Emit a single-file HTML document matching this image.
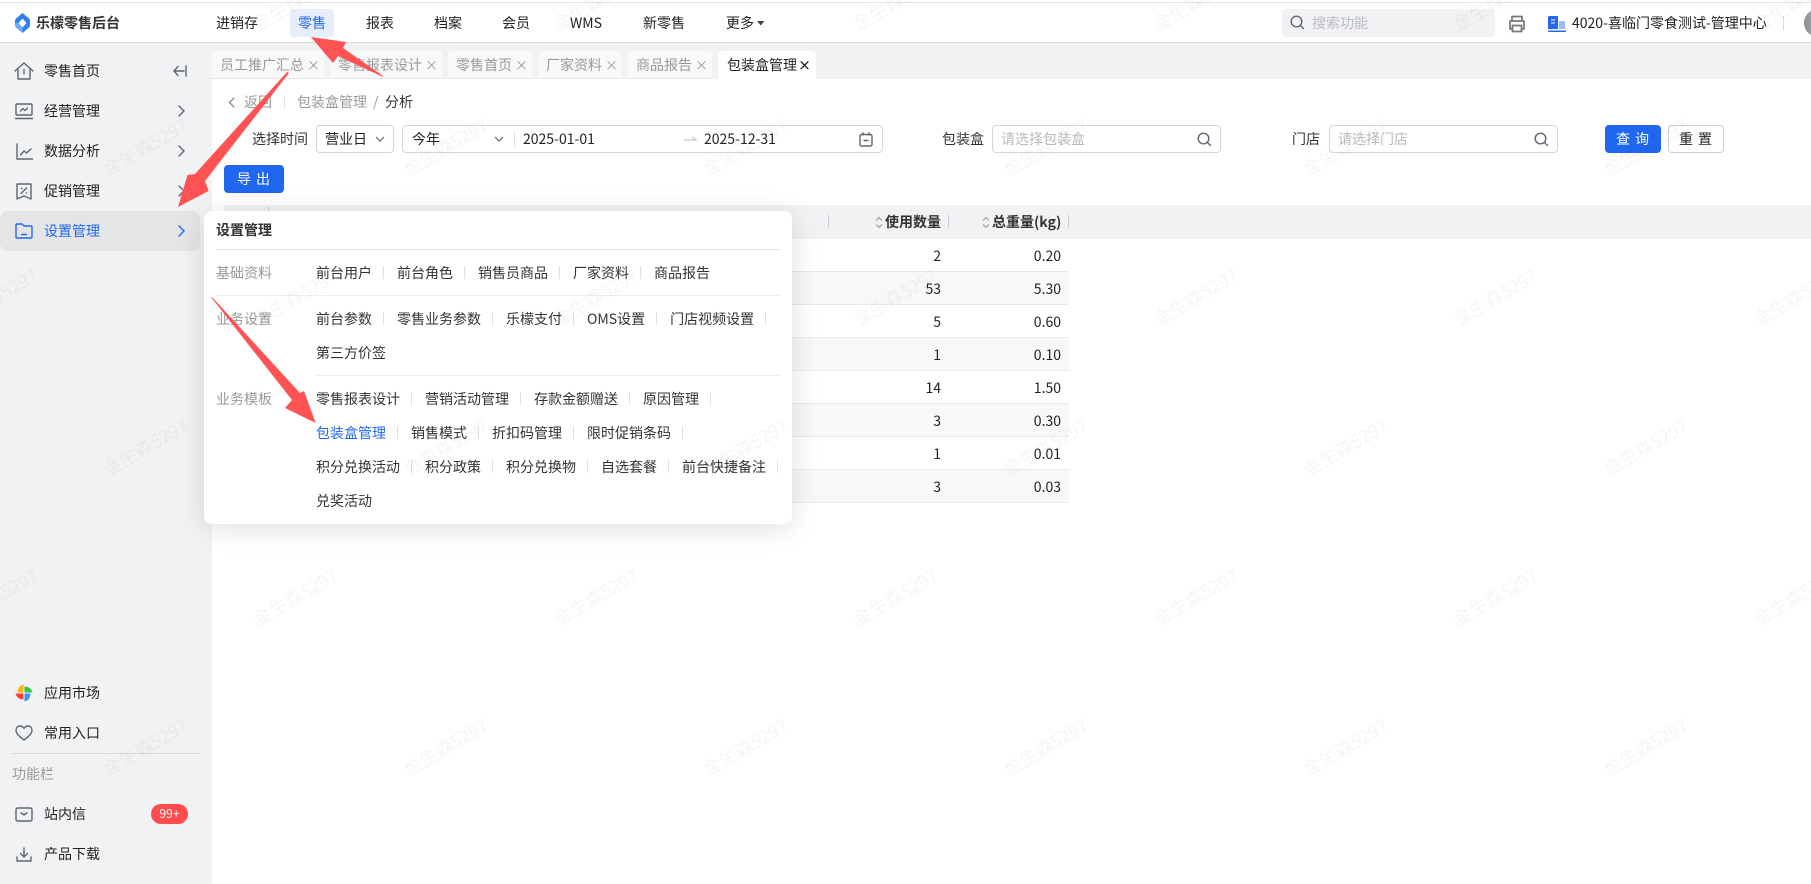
<!DOCTYPE html>
<html lang="zh">
<head>
<meta charset="utf-8">
<title>包装盒管理</title>
<style>
html,body{margin:0;padding:0;width:1811px;height:884px;overflow:hidden;background:#fff}
body{position:relative;font-family:"Noto Sans CJK SC","Liberation Sans",sans-serif;font-size:14px;color:#222}
.t{position:absolute;line-height:20px;height:20px;white-space:nowrap}
.b{position:absolute;box-sizing:border-box}
svg{position:absolute;overflow:visible}
.ic{fill:none;stroke:#5f6570;stroke-width:1.4;stroke-linecap:round;stroke-linejoin:round}
.tab{position:absolute;top:51px;height:28px;background:#f8f9fa;border-radius:4px 4px 0 0;border-bottom:1px solid #e4e6e9;box-sizing:border-box;color:#999;line-height:28px;padding-left:8px;white-space:nowrap}
.tab i{font-style:normal;position:absolute;right:4px;top:0;font-size:13px;color:#999}
.tab.on{background:#fff;color:#222;border-bottom:0;padding-left:9px}
.tab.on i{color:#222;font-weight:700;right:5px}
.sel{position:absolute;top:125px;height:28px;border:1px solid #d4d6da;border-radius:4px;box-sizing:border-box;background:#fff}
.btn{position:absolute;height:28px;top:125px;border-radius:4px;box-sizing:border-box;text-align:center;line-height:26px;letter-spacing:5px}
.row{position:absolute;left:224px;width:845px;height:33px;border-bottom:1px solid #e8eaec;box-sizing:border-box}
.row.e{background:#f7f9f9}
.v{position:absolute;line-height:20px;top:7px;text-align:right}
.m{position:absolute;left:316px;white-space:nowrap;line-height:20px;height:20px;color:#333;display:flex}
.m span{padding-right:12px;margin-right:13px;position:relative}
.m span:after{content:"";position:absolute;right:0;top:3px;height:13px;width:1px;background:#dcdfe3}
.m span.n:after{display:none}
.g{color:#999;position:absolute;left:216px;line-height:20px}
</style>
</head>
<body>

<!-- header -->
<div class="b" style="left:0;top:2px;width:1811px;height:41px;background:#fff;border-top:1px solid #e2e4e7;border-bottom:1px solid #d9dbde"></div>
<svg style="left:15px;top:13px" width="15" height="20" viewBox="0 0 15 20">
<path d="M7.5 0 L14 5.5 Q15 6.5 15 8 L15 12 Q15 13.5 14 14.5 L7.5 20 L1 14.5 Q0 13.5 0 12 L0 8 Q0 6.5 1 5.5 Z" fill="#2f80f0"/>
<path d="M7.5 5.5 L11.5 10 L7.5 14.5 L3.5 10 Z" fill="#fff"/>
<path d="M0 10 L3.5 10 L7.5 14.5 L7.5 20 L1 14.5 Q0 13.5 0 12 Z" fill="#6aaef7"/>
</svg>
<div class="t" style="left:36px;top:13px;font-weight:700;font-size:14px;color:#333">乐檬零售后台</div>
<div class="t" style="left:216px;top:13px">进销存</div>
<div class="b" style="left:290px;top:9px;width:44px;height:28px;background:#e6edfb;border-radius:4px"></div>
<div class="t" style="left:298px;top:13px;color:#2468f2">零售</div>
<div class="t" style="left:366px;top:13px">报表</div>
<div class="t" style="left:434px;top:13px">档案</div>
<div class="t" style="left:502px;top:13px">会员</div>
<div class="t" style="left:570px;top:13px">WMS</div>
<div class="t" style="left:643px;top:13px">新零售</div>
<div class="t" style="left:726px;top:13px">更多</div>
<svg style="left:757px;top:21px" width="8" height="5"><path d="M0 0H7.5L3.75 4.5Z" fill="#444"/></svg>

<div class="b" style="left:1282px;top:9px;width:213px;height:28px;background:#f1f2f4;border-radius:4px"></div>
<svg style="left:1290px;top:15px" width="15" height="15" viewBox="0 0 15 15"><circle cx="6.5" cy="6.5" r="5.3" class="ic"/><path d="M10.5 10.5L13.5 13.5" class="ic"/></svg>
<div class="t" style="left:1312px;top:13px;color:#b9bcc1">搜索功能</div>
<svg style="left:1508px;top:15px" width="18" height="18" viewBox="0 0 18 18"><path d="M4 6V1.5H14V6M4 14H2V6H16V14H14" fill="none" stroke="#777" stroke-width="1.7" stroke-linejoin="round"/><path d="M4.5 10.5H13.5V16.5H4.5Z" fill="none" stroke="#777" stroke-width="1.7"/></svg>
<svg style="left:1548px;top:16px" width="18" height="16" viewBox="0 0 18 16"><path d="M0 1.5A1.5 1.5 0 0 1 1.5 0H10V13H0Z" fill="#2468f2"/><path d="M11 5H17V13H11Z" fill="#9dbcf8"/><path d="M0 14.5H18V16H0Z" fill="#2468f2"/><path d="M3 4H7M3 7H7" stroke="#fff" stroke-width="1"/></svg>
<div class="t" style="left:1572px;top:13px">4020-喜临门零食测试-管理中心</div>
<div class="b" style="left:1783px;top:16px;width:1px;height:14px;background:#d5d7da"></div>
<div class="b" style="left:1804px;top:9px;width:28px;height:28px;border-radius:50%;background:linear-gradient(90deg,#8b8f94,#c9ccd0)"></div>

<!-- sidebar -->
<div class="b" style="left:0;top:43px;width:212px;height:841px;background:#f1f2f4"></div>
<div class="b" style="left:212px;top:43px;width:1599px;height:36px;background:#f1f2f4"></div>
<div class="b" style="left:0;top:211px;width:200px;height:40px;background:#e4e5e7;border-radius:8px"></div>

<svg style="left:14px;top:62px" width="20" height="18" viewBox="0 0 20 18"><path d="M1 9L10 1L19 9M4 7.5V17H16V7.5M10 7.5V12" class="ic"/></svg>
<svg style="left:15px;top:103px" width="18" height="17" viewBox="0 0 18 17"><rect x="1" y="1" width="16" height="11" rx="1" class="ic"/><path d="M.5 15.5H17.5M5.5 8L8 5.5L10 7.5L12.5 5" class="ic"/></svg>
<svg style="left:16px;top:143px" width="17" height="17" viewBox="0 0 17 17"><path d="M1 1V16H16.5M4.5 12L8 8L10.5 10L15 6" class="ic"/></svg>
<svg style="left:16px;top:183px" width="16" height="17" viewBox="0 0 16 17"><path d="M1 1H15V16L8 13L1 16Z" class="ic"/><path d="M5 10.5L10.5 5M5.5 5.5h.3M10.2 10h.3" class="ic"/></svg>
<svg style="left:15px;top:222px" width="18" height="18" viewBox="0 0 18 18"><path d="M1 3A1 1 0 0 1 2 2H7L9 4H16A1 1 0 0 1 17 5V15A1 1 0 0 1 16 16H2A1 1 0 0 1 1 15ZM6 12.5H12" fill="none" stroke="#2468f2" stroke-width="1.4" stroke-linejoin="round"/></svg>

<div class="t" style="left:44px;top:61px">零售首页</div>
<div class="t" style="left:44px;top:101px">经营管理</div>
<div class="t" style="left:44px;top:141px">数据分析</div>
<div class="t" style="left:44px;top:181px">促销管理</div>
<div class="t" style="left:44px;top:221px;color:#2468f2">设置管理</div>

<svg style="left:173px;top:65px" width="14" height="12" viewBox="0 0 14 12"><path d="M1 6H11M5 1.5L1 6L5 10.5M13 1V11" class="ic"/></svg>
<svg style="left:178px;top:105px" width="7" height="12" viewBox="0 0 7 12"><path d="M1 1L6 6L1 11" class="ic"/></svg>
<svg style="left:178px;top:145px" width="7" height="12" viewBox="0 0 7 12"><path d="M1 1L6 6L1 11" class="ic"/></svg>
<svg style="left:178px;top:185px" width="7" height="12" viewBox="0 0 7 12"><path d="M1 1L6 6L1 11" class="ic"/></svg>
<svg style="left:178px;top:225px" width="7" height="12" viewBox="0 0 7 12"><path d="M1 1L6 6L1 11" fill="none" stroke="#2468f2" stroke-width="1.4" stroke-linecap="round"/></svg>

<svg style="left:15px;top:684px" width="18" height="18" viewBox="0 0 18 18">
<path d="M8.5 8.5H2.5C2.5 4.5 4.5 1.5 8.5 .5Z" fill="#fbb516"/>
<path transform="rotate(90 9 9)" d="M8.5 8.5H2.5C2.5 4.5 4.5 1.5 8.5 .5Z" fill="#37c24a"/>
<path transform="rotate(180 9 9)" d="M8.5 8.5H2.5C2.5 4.5 4.5 1.5 8.5 .5Z" fill="#3d95f5"/>
<path transform="rotate(270 9 9)" d="M8.5 8.5H2.5C2.5 4.5 4.5 1.5 8.5 .5Z" fill="#f4433c"/>
</svg>
<div class="t" style="left:44px;top:683px">应用市场</div>
<svg style="left:15px;top:725px" width="18" height="16" viewBox="0 0 18 16"><path d="M9 15C5 12 1 9 1 5.2C1 2.7 3 1 5 1C6.8 1 8 2 9 3.4C10 2 11.2 1 13 1C15 1 17 2.7 17 5.2C17 9 13 12 9 15Z" class="ic"/></svg>
<div class="t" style="left:44px;top:723px">常用入口</div>
<div class="b" style="left:12px;top:753px;width:188px;height:1px;background:#d8dadd"></div>
<div class="t" style="left:12px;top:764px;color:#999">功能栏</div>
<svg style="left:15px;top:807px" width="18" height="15" viewBox="0 0 18 15"><rect x="1" y="1" width="16" height="13" rx="1.5" class="ic"/><path d="M6 6L9 8L12 6" class="ic"/></svg>
<div class="t" style="left:44px;top:804px">站内信</div>
<div class="b" style="left:151px;top:804px;width:37px;height:20px;border-radius:10px;background:#ff4d4f;color:#fff;text-align:center;line-height:20px;font-size:12px">99+</div>
<svg style="left:16px;top:847px" width="16" height="15" viewBox="0 0 16 15"><path d="M8 1V9.5M4.5 6.5L8 10L11.5 6.5M1 10V14H15V10" class="ic"/></svg>
<div class="t" style="left:44px;top:844px">产品下载</div>

<!-- tabs -->
<div class="tab" style="left:212px;width:112px">员工推广汇总<i>×</i></div>
<div class="tab" style="left:330px;width:112px">零售报表设计<i>×</i></div>
<div class="tab" style="left:448px;width:84px">零售首页<i>×</i></div>
<div class="tab" style="left:538px;width:84px">厂家资料<i>×</i></div>
<div class="tab" style="left:628px;width:84px">商品报告<i>×</i></div>
<div class="tab on" style="left:718px;width:98px">包装盒管理<i>×</i></div>

<!-- breadcrumb -->
<svg style="left:228px;top:97px" width="7" height="11" viewBox="0 0 7 11"><path d="M6 1L1.5 5.5L6 10" fill="none" stroke="#8a8d92" stroke-width="1.3" stroke-linecap="round"/></svg>
<div class="t" style="left:244px;top:92px;color:#999">返回</div>
<div class="b" style="left:284px;top:96px;width:1px;height:12px;background:#dcdfe3"></div>
<div class="t" style="left:297px;top:92px;color:#999">包装盒管理</div>
<div class="t" style="left:373px;top:92px;color:#999">/</div>
<div class="t" style="left:385px;top:92px;color:#333">分析</div>

<!-- filters -->
<div class="t" style="left:252px;top:129px;color:#333">选择时间</div>
<div class="sel" style="left:316px;width:78px"></div>
<div class="t" style="left:325px;top:129px">营业日</div>
<svg style="left:375px;top:136px" width="10" height="6" viewBox="0 0 10 6"><path d="M1 1L5 5L9 1" fill="none" stroke="#666" stroke-width="1.2"/></svg>
<div class="sel" style="left:402px;width:481px"></div>
<div class="t" style="left:412px;top:129px">今年</div>
<svg style="left:494px;top:136px" width="10" height="6" viewBox="0 0 10 6"><path d="M1 1L5 5L9 1" fill="none" stroke="#666" stroke-width="1.2"/></svg>
<div class="b" style="left:514px;top:131px;width:1px;height:16px;background:#dcdfe3"></div>
<div class="t" style="left:523px;top:129px">2025-01-01</div>
<svg style="left:684px;top:136px" width="13" height="6" viewBox="0 0 13 6"><path d="M0 4H12L8.5 1" fill="none" stroke="#bbb" stroke-width="1"/></svg>
<div class="t" style="left:704px;top:129px">2025-12-31</div>
<svg style="left:859px;top:132px" width="14" height="15" viewBox="0 0 14 15"><rect x="1" y="2.5" width="12" height="11.5" rx="1.5" class="ic"/><path d="M4 .8V3M10 .8V3M5 8.5H9" class="ic"/></svg>

<div class="t" style="left:942px;top:129px;color:#333">包装盒</div>
<div class="sel" style="left:992px;width:229px"></div>
<div class="t" style="left:1001px;top:129px;color:#bbb">请选择包装盒</div>
<svg style="left:1197px;top:132px" width="15" height="15" viewBox="0 0 15 15"><circle cx="6.5" cy="6.5" r="5.3" class="ic"/><path d="M10.5 10.5L13.5 13.5" class="ic"/></svg>

<div class="t" style="left:1292px;top:129px;color:#333">门店</div>
<div class="sel" style="left:1329px;width:229px"></div>
<div class="t" style="left:1338px;top:129px;color:#bbb">请选择门店</div>
<svg style="left:1534px;top:132px" width="15" height="15" viewBox="0 0 15 15"><circle cx="6.5" cy="6.5" r="5.3" class="ic"/><path d="M10.5 10.5L13.5 13.5" class="ic"/></svg>

<div class="btn" style="left:1605px;width:56px;background:#2067f0;color:#fff;line-height:28px;padding-left:4px">查询</div>
<div class="btn" style="left:1668px;width:56px;border:1px solid #c9ccd0;color:#222;background:#fff;padding-left:4px">重置</div>
<div class="btn" style="left:224px;top:165px;width:60px;background:#2067f0;color:#fff;line-height:28px;padding-left:4px">导出</div>

<!-- table -->
<div class="b" style="left:224px;top:205px;width:1587px;height:34px;background:#f1f2f4"></div>
<div class="b" style="left:268px;top:207px;width:1px;height:14px;background:#c9ccd1"></div>
<div class="b" style="left:828px;top:215px;width:1px;height:13px;background:#c9ccd1"></div>
<div class="b" style="left:948px;top:215px;width:1px;height:13px;background:#c9ccd1"></div>
<div class="b" style="left:1068px;top:215px;width:1px;height:13px;background:#c9ccd1"></div>
<svg style="left:875px;top:216px" width="8" height="13" viewBox="0 0 8 13"><path d="M1 4.5L4 1.5L7 4.5M1 8.5L4 11.5L7 8.5" fill="none" stroke="#999" stroke-width="1.1"/></svg>
<div class="t" style="left:885px;top:212px;font-weight:700;color:#333">使用数量</div>
<svg style="left:982px;top:216px" width="8" height="13" viewBox="0 0 8 13"><path d="M1 4.5L4 1.5L7 4.5M1 8.5L4 11.5L7 8.5" fill="none" stroke="#999" stroke-width="1.1"/></svg>
<div class="t" style="left:992px;top:212px;font-weight:700;color:#333">总重量(kg)</div>

<div class="row" style="top:239px;height:33px"><div class="v" style="right:128px">2</div><div class="v" style="right:8px">0.20</div></div>
<div class="row e" style="top:272px"><div class="v" style="right:128px">53</div><div class="v" style="right:8px">5.30</div></div>
<div class="row" style="top:305px"><div class="v" style="right:128px">5</div><div class="v" style="right:8px">0.60</div></div>
<div class="row e" style="top:338px"><div class="v" style="right:128px">1</div><div class="v" style="right:8px">0.10</div></div>
<div class="row" style="top:371px"><div class="v" style="right:128px">14</div><div class="v" style="right:8px">1.50</div></div>
<div class="row e" style="top:404px"><div class="v" style="right:128px">3</div><div class="v" style="right:8px">0.30</div></div>
<div class="row" style="top:437px"><div class="v" style="right:128px">1</div><div class="v" style="right:8px">0.01</div></div>
<div class="row e" style="top:470px"><div class="v" style="right:128px">3</div><div class="v" style="right:8px">0.03</div></div>

<!-- popup -->
<div class="b" style="left:204px;top:211px;width:588px;height:313px;background:#fff;border-radius:8px;box-shadow:0 4px 28px rgba(0,0,0,.13)"></div>
<div class="t" style="left:216px;top:220px;font-weight:700;color:#333">设置管理</div>
<div class="b" style="left:216px;top:249px;width:564px;height:1px;background:#dfe1e4"></div>
<div class="b" style="left:216px;top:295px;width:564px;height:1px;background:#eceef0"></div>
<div class="b" style="left:316px;top:375px;width:464px;height:1px;background:#eceef0"></div>

<div class="g" style="top:263px">基础资料</div>
<div class="g" style="top:309px">业务设置</div>
<div class="g" style="top:389px">业务模板</div>

<div class="m" style="top:263px"><span>前台用户</span><span>前台角色</span><span>销售员商品</span><span>厂家资料</span><span class="n">商品报告</span></div>
<div class="m" style="top:309px"><span>前台参数</span><span>零售业务参数</span><span>乐檬支付</span><span>OMS设置</span><span>门店视频设置</span></div>
<div class="m" style="top:343px"><span class="n">第三方价签</span></div>
<div class="m" style="top:389px"><span>零售报表设计</span><span>营销活动管理</span><span>存款金额赠送</span><span>原因管理</span></div>
<div class="m" style="top:423px"><span style="color:#2468f2">包装盒管理</span><span>销售模式</span><span>折扣码管理</span><span>限时促销条码</span></div>
<div class="m" style="top:457px"><span>积分兑换活动</span><span>积分政策</span><span>积分兑换物</span><span>自选套餐</span><span>前台快捷备注</span></div>
<div class="m" style="top:491px"><span class="n">兑奖活动</span></div>

<!-- watermark and arrows -->
<svg style="left:0;top:0" width="1811" height="884" viewBox="0 0 1811 884">
<g font-family="Noto Sans CJK SC, Liberation Sans, sans-serif" font-size="18" fill="#000" fill-opacity=".04" text-anchor="middle">
<text transform="translate(299 8) rotate(-30)">金生森5297</text>
<text transform="translate(599 8) rotate(-30)">金生森5297</text>
<text transform="translate(899 8) rotate(-30)">金生森5297</text>
<text transform="translate(1199 8) rotate(-30)">金生森5297</text>
<text transform="translate(1499 8) rotate(-30)">金生森5297</text>
<text transform="translate(1799 8) rotate(-30)">金生森5297</text>
<text transform="translate(149 153) rotate(-30)">金生森5297</text>
<text transform="translate(449 153) rotate(-30)">金生森5297</text>
<text transform="translate(749 153) rotate(-30)">金生森5297</text>
<text transform="translate(1049 153) rotate(-30)">金生森5297</text>
<text transform="translate(1349 153) rotate(-30)">金生森5297</text>
<text transform="translate(1649 153) rotate(-30)">金生森5297</text>
<text transform="translate(-1 303) rotate(-30)">金生森5297</text>
<text transform="translate(299 303) rotate(-30)">金生森5297</text>
<text transform="translate(599 303) rotate(-30)">金生森5297</text>
<text transform="translate(899 303) rotate(-30)">金生森5297</text>
<text transform="translate(1199 303) rotate(-30)">金生森5297</text>
<text transform="translate(1499 303) rotate(-30)">金生森5297</text>
<text transform="translate(1799 303) rotate(-30)">金生森5297</text>
<text transform="translate(149 453) rotate(-30)">金生森5297</text>
<text transform="translate(449 453) rotate(-30)">金生森5297</text>
<text transform="translate(749 453) rotate(-30)">金生森5297</text>
<text transform="translate(1049 453) rotate(-30)">金生森5297</text>
<text transform="translate(1349 453) rotate(-30)">金生森5297</text>
<text transform="translate(1649 453) rotate(-30)">金生森5297</text>
<text transform="translate(-1 603) rotate(-30)">金生森5297</text>
<text transform="translate(299 603) rotate(-30)">金生森5297</text>
<text transform="translate(599 603) rotate(-30)">金生森5297</text>
<text transform="translate(899 603) rotate(-30)">金生森5297</text>
<text transform="translate(1199 603) rotate(-30)">金生森5297</text>
<text transform="translate(1499 603) rotate(-30)">金生森5297</text>
<text transform="translate(1799 603) rotate(-30)">金生森5297</text>
<text transform="translate(149 753) rotate(-30)">金生森5297</text>
<text transform="translate(449 753) rotate(-30)">金生森5297</text>
<text transform="translate(749 753) rotate(-30)">金生森5297</text>
<text transform="translate(1049 753) rotate(-30)">金生森5297</text>
<text transform="translate(1349 753) rotate(-30)">金生森5297</text>
<text transform="translate(1649 753) rotate(-30)">金生森5297</text>
</g>
<g fill="#ff5252">
<polygon points="383,76 383,77 338,56 333,63 311,37 346,42 343,48"/>
<polygon points="287,72 289,73 205,181 208.6,191 178,207 187.5,175 195,174"/>
<polygon points="211,297 212,297 300,393 304,391 315.7,423 285,408 292,400"/>
</g>
</svg>

</body>
</html>
